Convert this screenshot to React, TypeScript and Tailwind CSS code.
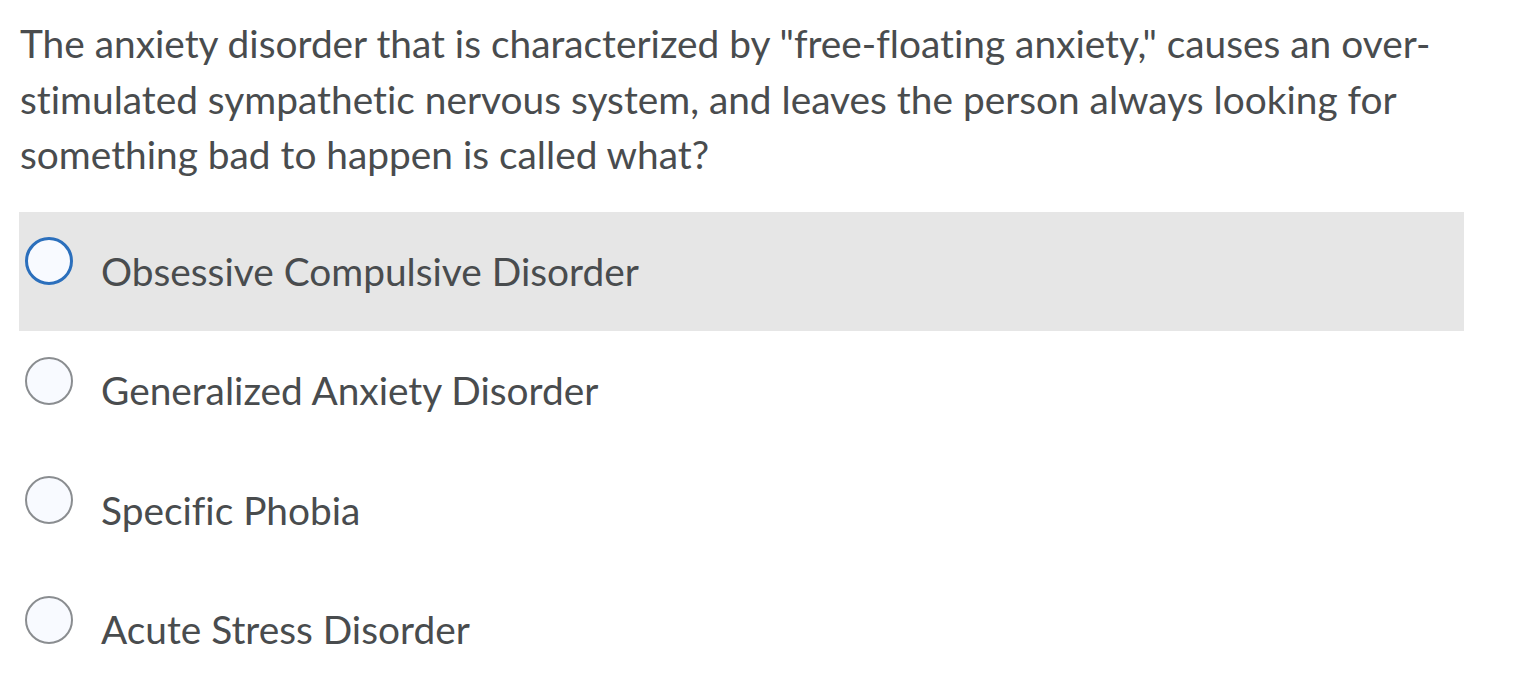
// Quiz question with radio options
const options = [
  'Obsessive Compulsive Disorder',
  'Generalized Anxiety Disorder',
  'Specific Phobia',
  'Acute Stress Disorder',
];

function Radio({ active }: { active: boolean }) {
  return (
    <span
      className={
        active
          ? 'mb-[20px] block h-[48px] w-[48px] shrink-0 rounded-full border-[3px] border-[#2b6fbc] bg-[#f8faff]'
          : 'mb-[20px] block h-[48px] w-[48px] shrink-0 rounded-full border-2 border-[#8a8d90] bg-[#f8faff]'
      }
    />
  );
}

export default function App() {
  return (
    <div className="min-h-screen bg-white pt-[16px] font-['Lato','Liberation_Sans',sans-serif] text-[#494c4e] [font-variant-ligatures:none]">
      <p className="w-[1445px] pl-[20px] text-[38.85px] leading-[55.5px]">
        The anxiety disorder that is characterized by "free-floating anxiety," causes an over-stimulated
        sympathetic nervous system, and leaves the person always looking for something bad to happen is
        called what?
      </p>
      <div className="mt-[29px] ml-[19px] w-[1445px]">
        {options.map((opt, i) => (
          <div
            key={opt}
            className={`flex h-[119.5px] items-center pl-[6px] ${i === 0 ? 'bg-[#e6e6e6]' : ''}`}
          >
            <Radio active={i === 0} />
            <span className="ml-[28px] text-[38.85px] leading-none">{opt}</span>
          </div>
        ))}
      </div>
    </div>
  );
}
